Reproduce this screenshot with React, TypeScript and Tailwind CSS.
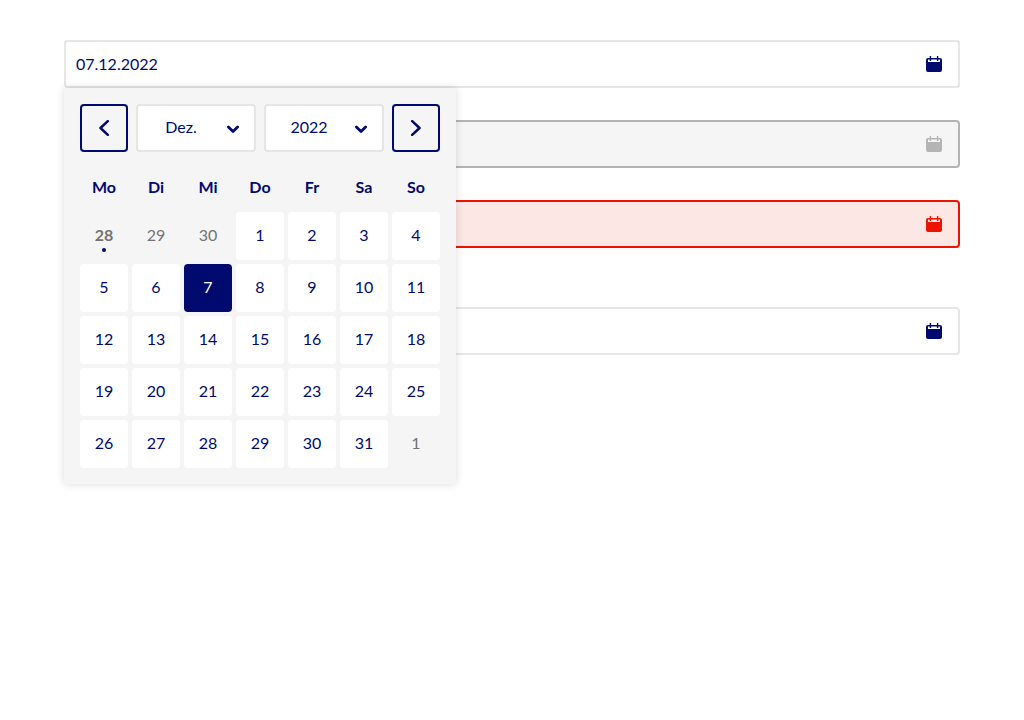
import { useState } from "react";

type Tone = "default" | "disabled" | "error";

const fieldStyles: Record<Tone, string> = {
  default: "border-[#e6e6e6] bg-white text-[#000a6e]",
  disabled: "border-[#b4b4b4] bg-[#f5f5f5] text-[#b4b4b4]",
  error: "border-[#eb1400] bg-[#fce7e5] text-[#eb1400]",
};

function CalendarIcon() {
  return (
    <svg viewBox="0 0 16 16" className="size-4" fill="currentColor" aria-hidden="true">
      <path
        fillRule="evenodd"
        d="M3.700 0h1.400v2h5.800V0h1.400v2h1.700a2 2 0 0 1 2 2v10a2 2 0 0 1-2 2H2a2 2 0 0 1-2-2V4a2 2 0 0 1 2-2h1.700ZM2 3.600V6h12V3.600h-1.700V5h-1.400V3.600H5.100V5H3.700V3.600Z"
      />
    </svg>
  );
}

function DateField({
  label,
  tone = "default",
  initial = "",
}: {
  label: string;
  tone?: Tone;
  initial?: string;
}) {
  const [value, setValue] = useState(initial);
  const disabled = tone === "disabled";
  return (
    <div className={`flex h-12 items-center rounded-[4px] border-2 ${fieldStyles[tone]}`}>
      <input
        type="text"
        aria-label={label}
        aria-invalid={tone === "error"}
        disabled={disabled}
        value={value}
        onChange={(e) => setValue(e.target.value)}
        className="h-full min-w-0 flex-1 bg-transparent px-2.5 pb-0.5 text-base outline-none"
      />
      <button
        type="button"
        aria-label="Kalender"
        disabled={disabled}
        className="flex h-full w-12 items-center justify-center"
      >
        <CalendarIcon />
      </button>
    </div>
  );
}

const months = ["Jan.", "Feb.", "März", "Apr.", "Mai", "Juni", "Juli", "Aug.", "Sep.", "Okt.", "Nov.", "Dez."];
const years = ["2020", "2021", "2022", "2023", "2024"];
const weekdays = ["Mo", "Di", "Mi", "Do", "Fr", "Sa", "So"];
const weeks = [
  [28, 29, 30, 1, 2, 3, 4],
  [5, 6, 7, 8, 9, 10, 11],
  [12, 13, 14, 15, 16, 17, 18],
  [19, 20, 21, 22, 23, 24, 25],
  [26, 27, 28, 29, 30, 31, 1],
];

function Dropdown({ label, options, initial }: { label: string; options: string[]; initial: string }) {
  const [value, setValue] = useState(initial);
  return (
    <div className="relative min-w-0 flex-1">
      <select
        aria-label={label}
        value={value}
        onChange={(e) => setValue(e.target.value)}
        className="h-12 w-full appearance-none rounded-[4px] border-2 border-[#e6e6e6] bg-white pr-[38px] pb-0.5 pl-2 text-center text-base outline-none"
      >
        {options.map((o) => (
          <option key={o}>{o}</option>
        ))}
      </select>
      <svg
        viewBox="0 0 16 16"
        className="pointer-events-none absolute top-4 right-4 size-4"
        fill="none"
        stroke="currentColor"
        strokeWidth="2.8"
        strokeLinecap="round"
        strokeLinejoin="round"
        aria-hidden="true"
      >
        <path d="M4.400 7.100 9 11.600l4.600-4.500" />
      </svg>
    </div>
  );
}

function Arrow({ label, path }: { label: string; path: string }) {
  return (
    <button
      type="button"
      aria-label={label}
      className="flex size-12 items-center justify-center rounded-[4px] border-2 border-[#000a6e]"
    >
      <svg
        viewBox="0 0 16 16"
        className="size-4"
        fill="none"
        stroke="currentColor"
        strokeWidth="2.500"
        strokeLinecap="round"
        strokeLinejoin="round"
        aria-hidden="true"
      >
        <path d={path} />
      </svg>
    </button>
  );
}

function Calendar() {
  const [selected, setSelected] = useState("1-2");
  return (
    <div className="absolute top-full left-0 z-10 bg-[#f5f5f5] px-4 pt-4 pb-3 shadow-[0_0_8px_rgba(0,0,0,0.15)]">
      <div className="flex gap-2">
        <Arrow label="Vorheriger Monat" path="M11.800 1.200 4.500 8l7.300 6.800" />
        <Dropdown label="Monat" options={months} initial="Dez." />
        <Dropdown label="Jahr" options={years} initial="2022" />
        <Arrow label="Nächster Monat" path="M4.200 1.200 11.500 8l-7.300 6.800" />
      </div>
      <table className="-mx-1 mt-3 border-separate border-spacing-1">
        <thead>
          <tr>
            {weekdays.map((d) => (
              <th key={d} scope="col" className="h-10 w-12 p-0 pb-0.5 text-base font-bold">
                {d}
              </th>
            ))}
          </tr>
        </thead>
        <tbody>
          {weeks.map((week, w) => (
            <tr key={w}>
              {week.map((day, d) => {
                const key = `${w}-${d}`;
                const outside = (w === 0 && d < 3) || (w === 4 && d === 6);
                const today = w === 0 && d === 0;
                const look =
                  key === selected
                    ? "bg-[#000a6e] text-white"
                    : outside
                      ? "text-[#737373]"
                      : "bg-white";
                return (
                  <td key={key} className="p-0">
                    <button
                      type="button"
                      aria-pressed={key === selected}
                      onClick={() => setSelected(key)}
                      className={`relative flex size-12 items-center justify-center rounded-[4px] pb-0.5 text-base ${look} ${today ? "font-bold" : ""}`}
                    >
                      {day}
                      {today && <span className="absolute bottom-2 size-1 rounded-full bg-[#000a6e]" />}
                    </button>
                  </td>
                );
              })}
            </tr>
          ))}
        </tbody>
      </table>
    </div>
  );
}

export default function App() {
  return (
    <main className="flex min-h-screen flex-col gap-8 bg-white px-16 py-10 font-['Lato',sans-serif] text-[#000a6e]">
      <div className="relative">
        <DateField label="Datum" initial="07.12.2022" />
        <Calendar />
      </div>
      <DateField label="Datum, deaktiviert" tone="disabled" />
      <div className="pb-[27px]">
        <DateField label="Datum, ungültig" tone="error" />
      </div>
      <DateField label="Weiteres Datum" />
    </main>
  );
}
